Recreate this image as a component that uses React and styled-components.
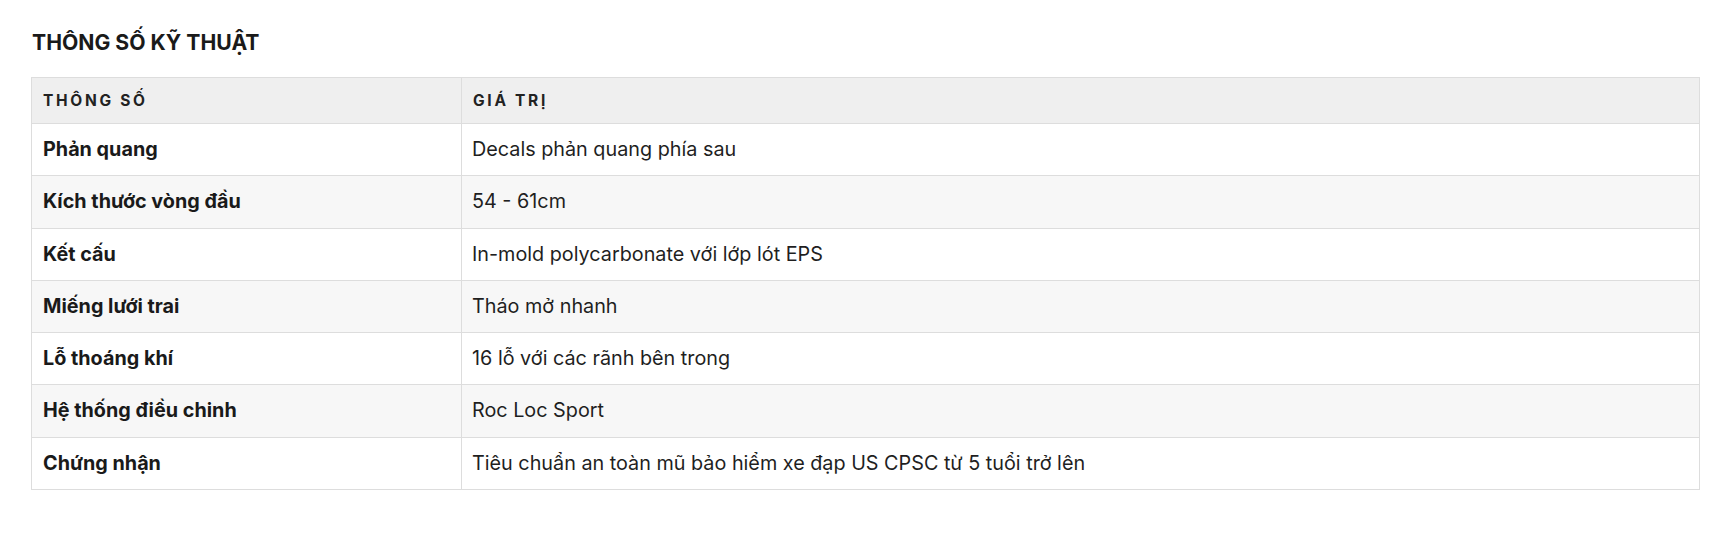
import { createGlobalStyle, styled } from "styled-components"

const specs = [
  { name: "Phản quang", value: "Decals phản quang phía sau" },
  { name: "Kích thước vòng đầu", value: "54 - 61cm" },
  { name: "Kết cấu", value: "In-mold polycarbonate với lớp lót EPS" },
  { name: "Miếng lưới trai", value: "Tháo mở nhanh" },
  { name: "Lỗ thoáng khí", value: "16 lỗ với các rãnh bên trong" },
  { name: "Hệ thống điều chinh", value: "Roc Loc Sport" },
  { name: "Chứng nhận", value: "Tiêu chuẩn an toàn mũ bảo hiểm xe đạp US CPSC từ 5 tuổi trở lên" },
]

const GlobalStyle = createGlobalStyle`
  body {
    margin: 0;
    background: #ffffff;
    font-family: Inter, "Noto Sans", sans-serif;
    color: #1f1f1f;
  }
`

const App = () => {
  return (
    <Page>
      <GlobalStyle />
      <Title>THÔNG SỐ KỸ THUẬT</Title>
      <SpecTable>
        <thead>
          <tr>
            <HeadCell $first>THÔNG SỐ</HeadCell>
            <HeadCell>GIÁ TRỊ</HeadCell>
          </tr>
        </thead>
        <tbody>
          {specs.map((spec, i) => (
            <Row key={spec.name} $striped={i % 2 === 1}>
              <NameCell>{spec.name}</NameCell>
              <ValueCell>{spec.value}</ValueCell>
            </Row>
          ))}
        </tbody>
      </SpecTable>
    </Page>
  )
}

const Page = styled.div`
  padding: 30px 21px 40px 31px;
`

const Title = styled.h2`
  margin: 0 0 23px 1px;
  font-size: 21.2px;
  line-height: 24px;
  font-weight: 700;
  color: #1a1a1a;
`

const SpecTable = styled.table`
  width: 100%;
  border-collapse: collapse;
  border: 1px solid #dddddd;
`

const HeadCell = styled.th`
  width: ${({ $first }) => ($first ? "407px" : "auto")};
  padding: 15px 11px;
  background: #efefef;
  border: 1px solid #dddddd;
  text-align: left;
  font-size: 15.5px;
  line-height: 15px;
  font-weight: 700;
  letter-spacing: 2.7px;
  color: #222222;
`

const Row = styled.tr`
  background: ${({ $striped }) => ($striped ? "#f7f7f7" : "#ffffff")};
`

const NameCell = styled.td`
  padding: 15px 11px;
  border: 1px solid #dddddd;
  font-size: 19.8px;
  line-height: 21.3px;
  font-weight: 700;
  color: #1a1a1a;
`

const ValueCell = styled.td`
  padding: 15px 11px 15px 10px;
  border: 1px solid #dddddd;
  font-size: 19.8px;
  line-height: 21.3px;
  font-weight: 400;
  color: #1f1f1f;
`

export default App
